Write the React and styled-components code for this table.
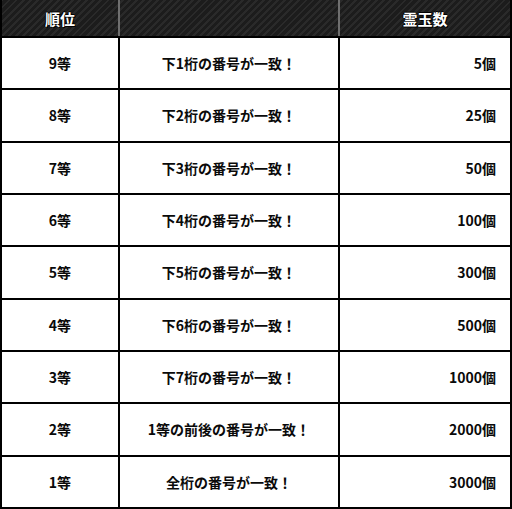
import React from "react";
import styled, { createGlobalStyle } from "styled-components";

const GlobalStyle = createGlobalStyle`
  html, body {
    margin: 0;
    padding: 0;
    background: #fff;
  }
  body {
    font-family: "Noto Sans CJK JP", "Noto Sans", sans-serif;
  }
`;

const Table = styled.table`
  width: 512px;
  height: 509px;
  border-collapse: collapse;
  table-layout: fixed;
  border-left: 2px solid #000;
  border-right: 2px solid #000;
  border-bottom: 2px solid #000;
`;

const HeadRow = styled.tr`
  height: 37px;
  background-color: #1e1e1e;
  background-image: repeating-linear-gradient(
    135deg,
    #2a2a2a 0px,
    #2a2a2a 2px,
    #1c1c1c 2px,
    #1c1c1c 5px
  );
`;

const HeadCell = styled.th`
  padding: 0;
  color: #fff;
  font-size: 15px;
  font-weight: 700;
  text-align: center;
  text-shadow: 1px 1px 0 #000, -1px 0 0 #000, 0 -1px 0 #000;
  border-bottom: 2px solid #000;
  border-left: ${(p) => (p.$first ? "none" : "2px solid #6f6f6f")};
`;

const Row = styled.tr`
  background: #fff;
`;

const Cell = styled.td`
  padding: ${(p) => (p.$align === "right" ? "0 14px 0 0" : "0")};
  color: #0a0a0a;
  font-size: 14px;
  font-weight: 700;
  text-align: ${(p) => p.$align || "center"};
  border-top: 2px solid #000;
  border-left: ${(p) => (p.$first ? "none" : "2px solid #000")};
`;

const rows = [
  ["9等", "下1桁の番号が一致！", "5個"],
  ["8等", "下2桁の番号が一致！", "25個"],
  ["7等", "下3桁の番号が一致！", "50個"],
  ["6等", "下4桁の番号が一致！", "100個"],
  ["5等", "下5桁の番号が一致！", "300個"],
  ["4等", "下6桁の番号が一致！", "500個"],
  ["3等", "下7桁の番号が一致！", "1000個"],
  ["2等", "1等の前後の番号が一致！", "2000個"],
  ["1等", "全桁の番号が一致！", "3000個"],
];

export default function App() {
  return (
    <>
      <GlobalStyle />
      <Table>
        <colgroup>
          <col style={{ width: "118px" }} />
          <col style={{ width: "220px" }} />
          <col />
        </colgroup>
        <thead>
          <HeadRow>
            <HeadCell $first>順位</HeadCell>
            <HeadCell></HeadCell>
            <HeadCell>霊玉数</HeadCell>
          </HeadRow>
        </thead>
        <tbody>
          {rows.map(([rank, cond, amount]) => (
            <Row key={rank}>
              <Cell $first>{rank}</Cell>
              <Cell>{cond}</Cell>
              <Cell $align="right">{amount}</Cell>
            </Row>
          ))}
        </tbody>
      </Table>
    </>
  );
}
